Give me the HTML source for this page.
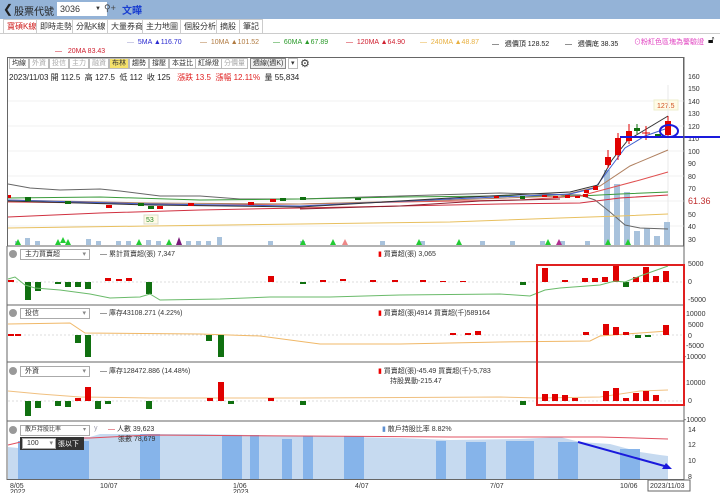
<!DOCTYPE html>
<html><head><meta charset="utf-8">
<style>
*{margin:0;padding:0;box-sizing:border-box}
body{width:720px;height:493px;overflow:hidden;background:#fff;font-family:"Liberation Sans","Noto Sans CJK TC",sans-serif;font-size:8px;color:#333;position:relative}
.a{position:absolute;white-space:nowrap}
#hdr{left:0;top:0;width:720px;height:19px;background:#94b3d7}
.tab{top:19px;height:15px;border:1px solid #ccc;border-bottom:none;font-size:8px;line-height:13px;padding:0 3px;background:#fff}
.tb{top:58px;height:11px;border:1px solid #bbb;font-size:7px;line-height:9px;padding:0 2px;background:#fff;color:#333}
.sel{border:1px solid #aaa;height:11px;font-size:7px;line-height:9px;padding-left:4px;background:#fff}
</style></head><body>
<div class="a" id="hdr"></div>
<div class="a" style="left:3px;top:2px;font-size:12px;color:#222">&#10094;</div>
<div class="a" style="left:14px;top:3px;font-size:10px;color:#222">股票代號</div>
<div class="a" style="left:57px;top:2px;width:50px;height:14px;background:#fff;font-size:9px;line-height:14px;padding-left:3px">3036<span style="position:absolute;left:38px;font-size:6px">▼</span></div>
<div class="a" style="left:104px;top:3px;font-size:9px;color:#444">⚲+</div>
<div class="a" style="left:122px;top:2px;font-size:10px;color:#1a3fd0;font-weight:bold">文曄</div>
<div class="a tab" style="left:3px;color:#d02020">寶碩K線</div>
<div class="a tab" style="left:36px">即時走勢</div>
<div class="a tab" style="left:72px">分點K線</div>
<div class="a tab" style="left:107px">大量券商</div>
<div class="a tab" style="left:142px">主力地圖</div>
<div class="a tab" style="left:180px">個股分析</div>
<div class="a tab" style="left:216px">摘股</div>
<div class="a tab" style="left:239px">筆記</div>
<div class="a" style="left:0;top:33px;width:720px;border-top:1px solid #ccc"></div>
<div class="a" style="left:127px;top:39px;font-size:7px;color:#2a2ad0"><span style="color:#99c">—</span> &nbsp;5MA ▲116.70</div>
<div class="a" style="left:200px;top:39px;font-size:7px;color:#b07a40"><span>—</span> &nbsp;10MA ▲101.52</div>
<div class="a" style="left:273px;top:39px;font-size:7px;color:#2a9a2a"><span>—</span> &nbsp;60MA ▲67.89</div>
<div class="a" style="left:346px;top:39px;font-size:7px;color:#d02030"><span>—</span> &nbsp;120MA ▲64.90</div>
<div class="a" style="left:420px;top:39px;font-size:7px;color:#e8b040"><span>—</span> &nbsp;240MA ▲48.87</div>
<div class="a" style="left:492px;top:39px;font-size:7px;color:#222">— &nbsp;&nbsp;週價頂 128.52</div>
<div class="a" style="left:565px;top:39px;font-size:7px;color:#222">— &nbsp;&nbsp;週價底 38.35</div>
<div class="a" style="left:634px;top:37px;font-size:7px;color:#e040c0">⊙粉紅色區塊為警驗證</div>
<div class="a" style="left:708px;top:35px;font-size:10px;color:#111">🔓︎</div>
<div class="a" style="left:55px;top:48px;font-size:7px;color:#d02030">— &nbsp;&nbsp;20MA 83.43</div>
<div class="a" style="left:7px;top:57px;width:677px;height:189px;border:1px solid #666;border-bottom:none"></div>
<div class="a tb" style="left:9px">均線</div><div class="a tb" style="left:29px;color:#aaa">外資</div><div class="a tb" style="left:49px;color:#aaa">投信</div><div class="a tb" style="left:69px;color:#aaa">主力</div><div class="a tb" style="left:89px;color:#aaa">融資</div>
<div class="a tb" style="left:109px;background:#f5e26b">布林</div><div class="a tb" style="left:129px">趨勢</div><div class="a tb" style="left:149px">撐壓</div><div class="a tb" style="left:169px">本益比</div><div class="a tb" style="left:195px">紅綠燈</div><div class="a tb" style="left:221px;color:#aaa">分價量</div>
<div class="a tb" style="left:250px;background:#eee;border-color:#888">週線(週K)</div><div class="a tb" style="left:288px">▾</div>
<div class="a" style="left:300px;top:57px;font-size:11px;color:#333">⚙</div>
<div class="a" style="left:9px;top:72px;font-size:8px;color:#222">2023/11/03 開 112.5 &nbsp;高 127.5 &nbsp;低 112 &nbsp;收 125 &nbsp;&nbsp;<span style="color:#e02020">漲跌 13.5 &nbsp;漲幅 12.11%</span> &nbsp;量 55,834</div>

<svg class="a" style="left:0;top:0" width="720" height="493">
<g stroke="#f0f0f0" stroke-width="1">
<line x1="8" y1="101" x2="684" y2="101"/><line x1="8" y1="126" x2="684" y2="126"/><line x1="8" y1="151" x2="684" y2="151"/><line x1="8" y1="176" x2="684" y2="176"/><line x1="8" y1="201" x2="684" y2="201"/><line x1="8" y1="226" x2="684" y2="226"/>
</g>
<g font-size="7" fill="#333" font-family="Liberation Sans">
<text x="688" y="79">160</text><text x="688" y="91">150</text><text x="688" y="104">140</text><text x="688" y="116">130</text><text x="688" y="129">120</text><text x="688" y="141">110</text><text x="688" y="154">100</text><text x="688" y="166">90</text><text x="688" y="179">80</text><text x="688" y="191">70</text><text x="688" y="217">50</text><text x="688" y="229">40</text><text x="688" y="242">30</text>
</g>
<text x="688" y="204" font-size="9" fill="#c03030">61.36</text>
<rect x="654" y="100" width="24" height="10" fill="#fffbe6" stroke="#eec"/><text x="657" y="108" font-size="7" fill="#d05020">127.5</text>
<rect x="144" y="215" width="14" height="9" fill="#fffbe6" stroke="#ddc"/><text x="146" y="222" font-size="7" fill="#2a8a2a">53</text>
<line x1="668" y1="85" x2="668" y2="246" stroke="#e8e8e8"/>
<g fill="#a8c2dc">
<rect x="15" y="241" width="4" height="4"/><rect x="25" y="238" width="5" height="7"/><rect x="35" y="241" width="5" height="4"/><rect x="86" y="239" width="5" height="6"/><rect x="96" y="241" width="5" height="4"/><rect x="116" y="241" width="5" height="4"/><rect x="126" y="241" width="5" height="4"/><rect x="146" y="240" width="5" height="5"/><rect x="156" y="241" width="5" height="4"/><rect x="186" y="241" width="5" height="4"/><rect x="196" y="241" width="5" height="4"/><rect x="206" y="241" width="5" height="4"/><rect x="217" y="237" width="5" height="8"/><rect x="268" y="241" width="5" height="4"/><rect x="300" y="241" width="5" height="4"/><rect x="380" y="241" width="5" height="4"/><rect x="420" y="241" width="5" height="4"/><rect x="480" y="241" width="5" height="4"/><rect x="510" y="241" width="5" height="4"/><rect x="540" y="241" width="5" height="4"/><rect x="560" y="241" width="5" height="4"/><rect x="585" y="241" width="5" height="4"/>
<rect x="604" y="170" width="6" height="75"/><rect x="614" y="184" width="6" height="61"/><rect x="624" y="192" width="6" height="53"/><rect x="634" y="231" width="6" height="14"/><rect x="644" y="228" width="6" height="17"/><rect x="654" y="236" width="6" height="9"/><rect x="664" y="222" width="6" height="23"/>
</g>
<g fill="#22cc33"><path d="M15 245l3-6 3 6zM55 245l3-6 3 6zM60 243l3-6 3 6zM65 245l3-6 3 6zM136 245l3-6 3 6zM166 245l3-6 3 6zM416 245l3-6 3 6zM456 245l3-6 3 6zM545 245l3-6 3 6zM605 245l3-6 3 6zM625 245l3-6 3 6zM300 245l3-6 3 6zM330 245l3-6 3 6z"/></g>
<path d="M176 245l3-8 3 8z" fill="#7a1a7a"/><path d="M556 245l3-6 3 6z" fill="#b03090"/><path d="M342 245l3-6 3 6z" fill="#e88"/>
<g fill="none" stroke-width="1">
<polyline stroke="#666" points="8,184 30,188 60,190 100,189 120,191 160,196 200,196 240,199 300,199 400,196 500,193 580,195 595,200 610,212 625,225 640,228 668,229"/>
<polyline stroke="#d03040" points="8,217 100,213 200,210 300,208 400,206 500,204 580,203 620,198 668,195"/>
<polyline stroke="#e8c060" points="8,228 150,226 300,224 450,222 560,218 620,216 668,214"/>
<polyline stroke="#3a9a3a" points="8,198 100,197 200,200 300,199 400,197 500,196 580,196 620,194 668,192"/>
<polyline stroke="#e05050" points="8,202 100,203 200,205 300,204 400,202 520,200 580,196 610,188 640,180 668,172"/>
<polyline stroke="#b08060" points="8,200 150,203 300,204 450,200 560,196 600,186 630,166 668,150"/>
<polyline stroke="#4060d0" points="8,200 150,204 300,206 450,199 570,194 595,188 610,168 625,148 645,136 668,128"/>
<polyline stroke="#333" points="8,201 150,205 300,207 450,198 570,192 598,185 612,160 628,140 648,128 668,116"/>
<polyline stroke="#8a2030" points="300,209 400,206 480,201 560,199"/>
</g>
<g fill="#e00000">
<rect x="8" y="195" width="3" height="3"/><rect x="106" y="205" width="6" height="3"/><rect x="157" y="206" width="6" height="3"/><rect x="188" y="203" width="6" height="3"/><rect x="248" y="202" width="6" height="3"/><rect x="270" y="199" width="6" height="3"/><rect x="494" y="196" width="5" height="2"/><rect x="542" y="195" width="5" height="2"/><rect x="553" y="196" width="5" height="2"/><rect x="565" y="195" width="5" height="3"/><rect x="575" y="196" width="5" height="2"/><rect x="583" y="194" width="5" height="3"/><rect x="593" y="186" width="5" height="4"/><rect x="584" y="190" width="5" height="3"/>
<rect x="605" y="157" width="6" height="8"/><rect x="615" y="138" width="6" height="17"/><rect x="626" y="131" width="6" height="10"/><rect x="665" y="121" width="6" height="14"/>
</g>
<g fill="#107010"><rect x="25" y="197" width="6" height="4"/><rect x="65" y="201" width="6" height="3"/><rect x="138" y="203" width="6" height="3"/><rect x="148" y="206" width="6" height="3"/><rect x="280" y="198" width="6" height="3"/><rect x="300" y="197" width="6" height="3"/><rect x="355" y="198" width="6" height="2"/><rect x="520" y="196" width="5" height="3"/><rect x="634" y="128" width="6" height="3"/><rect x="655" y="134" width="6" height="2"/></g>
<g stroke="#e00000"><line x1="608" y1="150" x2="608" y2="168"/><line x1="618" y1="133" x2="618" y2="160"/><line x1="629" y1="124" x2="629" y2="144"/><line x1="668" y1="116" x2="668" y2="137"/><line x1="642" y1="133" x2="650" y2="133"/><line x1="646" y1="126" x2="646" y2="140"/></g>
<line x1="637" y1="124" x2="637" y2="134" stroke="#107010"/>
<line x1="620" y1="137" x2="720" y2="137" stroke="#1a1adc" stroke-width="2"/>
<ellipse cx="669" cy="131" rx="9" ry="6" fill="none" stroke="#1a1adc" stroke-width="2"/>

<g stroke="#666" stroke-width="1" fill="none">
<line x1="7" y1="246" x2="684" y2="246"/><line x1="7" y1="305" x2="684" y2="305"/><line x1="7" y1="362" x2="684" y2="362"/><line x1="7" y1="421" x2="684" y2="421"/><line x1="7" y1="479.5" x2="684" y2="479.5"/>
<line x1="684" y1="57" x2="684" y2="480"/><line x1="7" y1="246" x2="7" y2="480"/>
</g>
<g font-size="7" fill="#333">
<text x="688" y="266">5000</text><text x="688" y="284">0</text><text x="688" y="302">-5000</text>
<text x="686" y="316">10000</text><text x="688" y="327">5000</text><text x="688" y="338">0</text><text x="686" y="348">-5000</text><text x="684" y="359">-10000</text>
<text x="686" y="385">10000</text><text x="688" y="403">0</text><text x="684" y="422">-10000</text>
<text x="688" y="432">14</text><text x="688" y="447">12</text><text x="688" y="463">10</text><text x="688" y="479">8</text>
<text x="10" y="488">8/05</text><text x="10" y="494">2022</text><text x="100" y="488">10/07</text><text x="233" y="488">1/06</text><text x="233" y="494">2023</text><text x="355" y="488">4/07</text><text x="490" y="488">7/07</text><text x="620" y="488">10/06</text>
</g>
<rect x="648" y="480" width="42" height="11" fill="#fff" stroke="#666"/><text x="650" y="488" font-size="7" fill="#333">2023/11/03</text>
<g stroke="#ddd" stroke-dasharray="2,2"><line x1="8" y1="282" x2="684" y2="282"/><line x1="8" y1="335" x2="684" y2="335"/><line x1="8" y1="401" x2="684" y2="401"/></g>
<g fill="#e00000"><rect x="8" y="280" width="6" height="2"/><rect x="105" y="278" width="6" height="3"/><rect x="116" y="279" width="6" height="2"/><rect x="126" y="278" width="6" height="3"/><rect x="268" y="276" width="6" height="6"/><rect x="320" y="280" width="6" height="2"/><rect x="340" y="279" width="6" height="2"/><rect x="370" y="280" width="6" height="2"/><rect x="392" y="280" width="6" height="2"/><rect x="420" y="280" width="6" height="2"/><rect x="440" y="281" width="6" height="1"/><rect x="460" y="281" width="6" height="1"/>
<rect x="542" y="268" width="6" height="14"/><rect x="562" y="280" width="6" height="2"/><rect x="582" y="278" width="6" height="4"/><rect x="592" y="278" width="6" height="4"/><rect x="602" y="277" width="6" height="5"/><rect x="613" y="265" width="6" height="17"/><rect x="633" y="277" width="6" height="5"/><rect x="643" y="267" width="6" height="15"/><rect x="653" y="276" width="6" height="6"/><rect x="663" y="271" width="6" height="11"/></g>
<g fill="#107010"><rect x="25" y="282" width="6" height="18"/><rect x="35" y="282" width="6" height="9"/><rect x="55" y="282" width="6" height="2"/><rect x="65" y="282" width="6" height="5"/><rect x="75" y="282" width="6" height="5"/><rect x="85" y="282" width="6" height="7"/><rect x="146" y="282" width="6" height="12"/><rect x="300" y="282" width="6" height="2"/><rect x="520" y="282" width="6" height="3"/><rect x="623" y="282" width="6" height="5"/></g>
<polyline fill="none" stroke="#6aba6a" points="8,279 15,277 25,285 35,288 60,290 90,294 110,298 140,297 150,294 160,300 220,299 270,297 330,297 400,295 500,294 530,296 545,290 560,288 600,285 615,281 625,282 640,276 668,266"/>
<polyline fill="none" stroke="#f0b868" points="8,324 70,323 85,333 200,334 260,336 320,344 400,344 500,342 590,341 600,336 640,333 668,331"/>
<g fill="#107010"><rect x="75" y="335" width="6" height="8"/><rect x="85" y="335" width="6" height="22"/><rect x="206" y="335" width="6" height="6"/><rect x="218" y="335" width="6" height="22"/><rect x="635" y="335" width="6" height="3"/><rect x="645" y="335" width="6" height="2"/></g>
<g fill="#e00000"><rect x="8" y="334" width="6" height="2"/><rect x="15" y="334" width="6" height="2"/><rect x="450" y="333" width="6" height="2"/><rect x="465" y="333" width="6" height="2"/><rect x="475" y="331" width="6" height="4"/><rect x="583" y="332" width="6" height="3"/><rect x="603" y="324" width="6" height="11"/><rect x="613" y="327" width="6" height="8"/><rect x="623" y="332" width="6" height="3"/><rect x="663" y="325" width="6" height="10"/></g>
<polyline fill="none" stroke="#f0c080" points="8,391 40,394 80,397 150,398 300,398 500,397 540,398 600,397 640,391 668,390"/>
<g fill="#107010"><rect x="25" y="401" width="6" height="15"/><rect x="35" y="401" width="6" height="7"/><rect x="55" y="401" width="6" height="5"/><rect x="65" y="401" width="6" height="6"/><rect x="95" y="401" width="6" height="8"/><rect x="105" y="401" width="6" height="3"/><rect x="146" y="401" width="6" height="8"/><rect x="228" y="401" width="6" height="3"/><rect x="300" y="401" width="6" height="4"/><rect x="520" y="401" width="6" height="4"/></g>
<g fill="#e00000"><rect x="75" y="398" width="6" height="3"/><rect x="85" y="387" width="6" height="14"/><rect x="207" y="398" width="6" height="3"/><rect x="218" y="382" width="6" height="19"/><rect x="268" y="398" width="6" height="3"/><rect x="542" y="394" width="6" height="7"/><rect x="552" y="394" width="6" height="7"/><rect x="562" y="395" width="6" height="6"/><rect x="572" y="398" width="6" height="3"/><rect x="603" y="391" width="6" height="10"/><rect x="613" y="388" width="6" height="13"/><rect x="623" y="398" width="6" height="3"/><rect x="633" y="393" width="6" height="8"/><rect x="643" y="391" width="6" height="10"/><rect x="653" y="395" width="6" height="6"/></g>
<rect x="537" y="265" width="147" height="140" fill="none" stroke="#e02020" stroke-width="2"/>
<path d="M8 447 L18 448 L25 441 L40 437 L90 437 L100 434 L200 434 L300 436 L400 438 L450 440 L520 439 L560 437 L580 442 L610 444 L640 452 L660 455 L668 456 L668 479 L8 479Z" fill="#c6daf0"/>
<g fill="#86b4ea"><rect x="18" y="441" width="71" height="38"/><rect x="140" y="434" width="20" height="45"/><rect x="222" y="435" width="20" height="44"/><rect x="250" y="435" width="9" height="44"/><rect x="282" y="439" width="10" height="40"/><rect x="303" y="436" width="10" height="43"/><rect x="344" y="436" width="20" height="43"/><rect x="436" y="441" width="10" height="38"/><rect x="466" y="442" width="20" height="37"/><rect x="506" y="441" width="28" height="38"/><rect x="558" y="442" width="20" height="37"/><rect x="620" y="449" width="20" height="30"/></g>
<polyline fill="none" stroke="#e05060" points="8,445 25,441 40,438 90,438 150,435 300,436 450,437 600,437 668,439"/>
<line x1="578" y1="442" x2="668" y2="467" stroke="#1a1adc" stroke-width="2"/><path d="M672 469 L662 469 L666 463Z" fill="#1a1adc"/>
</svg>
<div class="a" style="left:9px;top:250px;width:8px;height:8px;border-radius:50%;background:#999"></div>
<div class="a sel" style="left:20px;top:249px;width:70px">主力買賣超<span style="position:absolute;right:3px;color:#888">▾</span></div>
<div class="a" style="left:100px;top:249px;font-size:7px">— 累計買賣超(張) 7,347</div>
<div class="a" style="left:378px;top:249px;font-size:7px"><span style="color:#e00">▮</span> 買賣超(張) 3,065</div>
<div class="a" style="left:9px;top:309px;width:8px;height:8px;border-radius:50%;background:#999"></div>
<div class="a sel" style="left:20px;top:308px;width:70px">投信<span style="position:absolute;right:3px;color:#888">▾</span></div>
<div class="a" style="left:100px;top:308px;font-size:7px">— 庫存43108.271 (4.22%)</div>
<div class="a" style="left:378px;top:308px;font-size:7px"><span style="color:#e00">▮</span> 買賣超(張)4914 買賣超(千)589164</div>
<div class="a" style="left:9px;top:367px;width:8px;height:8px;border-radius:50%;background:#999"></div>
<div class="a sel" style="left:20px;top:366px;width:70px">外資<span style="position:absolute;right:3px;color:#888">▾</span></div>
<div class="a" style="left:100px;top:366px;font-size:7px">— 庫存128472.886 (14.48%)</div>
<div class="a" style="left:378px;top:366px;font-size:7px"><span style="color:#e00">▮</span> 買賣超(張)-45.49 買賣超(千)-5,783</div>
<div class="a" style="left:390px;top:376px;font-size:7px">持股異動-215.47</div>
<div class="a" style="left:9px;top:426px;width:8px;height:8px;border-radius:50%;background:#999"></div>
<div class="a sel" style="left:20px;top:425px;width:70px;font-size:6px">散戶持股比率<span style="position:absolute;right:3px;color:#888">▾</span></div>
<div class="a" style="left:94px;top:425px;font-size:7px;color:#99a">y</div>
<div class="a" style="left:20px;top:437px;width:64px;height:13px;background:#333"></div>
<div class="a sel" style="left:22px;top:438px;width:34px">100<span style="position:absolute;right:2px;color:#888">▾</span></div>
<div class="a" style="left:58px;top:439px;font-size:7px;color:#fff">張以下</div>
<div class="a" style="left:108px;top:424px;font-size:7px"><span style="color:#d02030">—</span> 人數 39,623</div>
<div class="a" style="left:118px;top:434px;font-size:7px">張數 78,679</div>
<div class="a" style="left:382px;top:424px;font-size:7px"><span style="color:#5d8fd0">▮</span> 散戶持股比率 8.82%</div>
</body></html>
